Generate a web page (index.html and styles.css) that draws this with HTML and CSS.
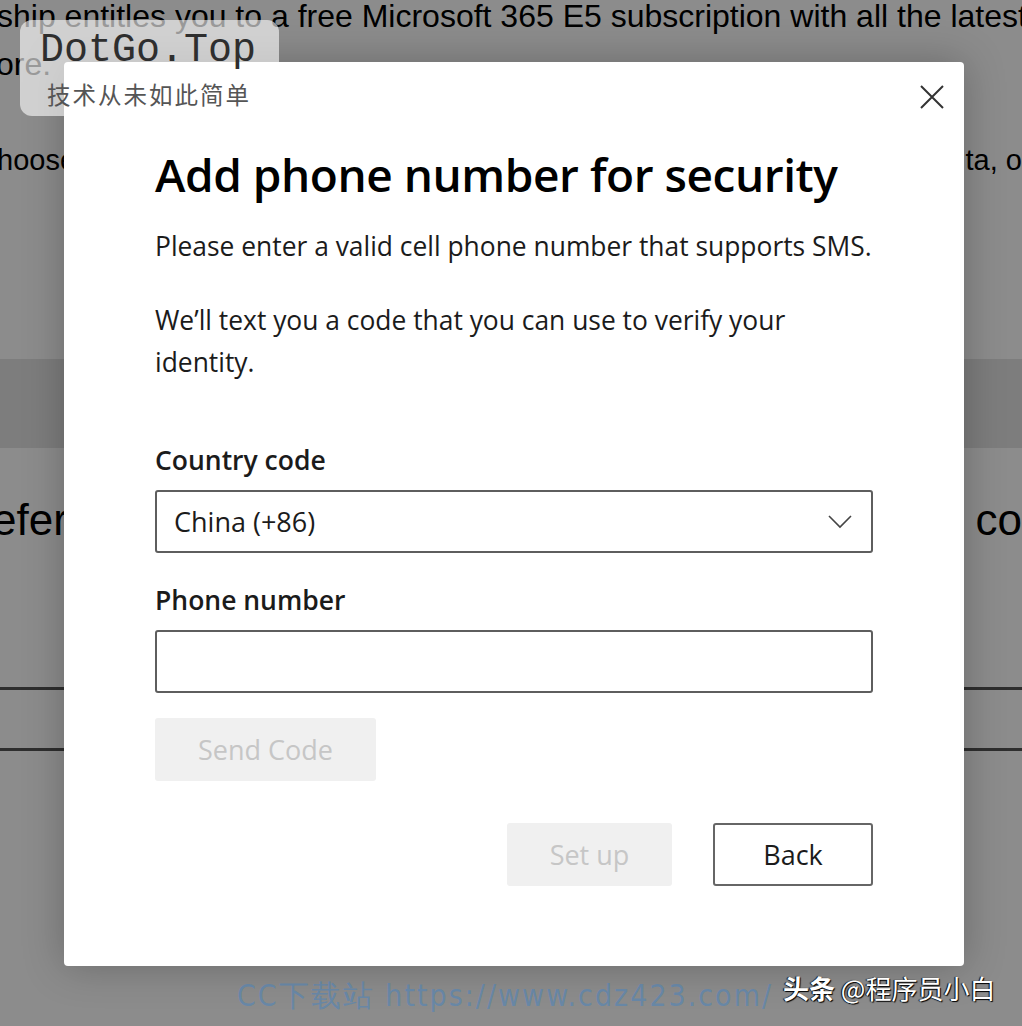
FILE: index.html
```html
<!DOCTYPE html>
<html lang="en">
<head>
<meta charset="utf-8">
<title>Add phone number for security</title>
<link rel="stylesheet" href="styles.css">
</head>
<body>
<div class="page">
  <p class="bg-line l1">ship entitles you to a free Microsoft 365 E5 subscription with all the latest features</p>
  <p class="bg-line l2">ore.</p>
  <div class="bg-row l3"><span>hoose which apps</span><span>ta, o</span></div>
  <div class="band"></div>
  <div class="bg-row big"><span>efer</span><span>co</span></div>
  <div class="rule r1"></div>
  <div class="rule r2"></div>
</div>
<div class="overlay"></div>

<div class="modal" role="dialog" aria-labelledby="dlg-title">
  <button class="close" aria-label="Close">
    <svg width="24" height="24" viewBox="0 0 24 24"><path d="M1 1 L23 23 M23 1 L1 23" stroke="#333" stroke-width="2" fill="none"/></svg>
  </button>
  <h1 id="dlg-title" class="title">Add phone number for security</h1>
  <p class="text t1">Please enter a valid cell phone number that supports SMS.</p>
  <p class="text t2">We’ll text you a code that you can use to verify your identity.</p>
  <label class="label lbl-country">Country code</label>
  <div class="field select">
    <span>China (+86)</span>
    <svg class="chev" width="24" height="14" viewBox="0 0 24 14"><path d="M1 1 L12 12 L23 1" stroke="#444" stroke-width="1.6" fill="none"/></svg>
  </div>
  <label class="label lbl-phone">Phone number</label>
  <div class="field input"></div>
  <button class="btn btn-disabled send">Send Code</button>
  <div class="actions">
    <button class="btn btn-disabled setup">Set up</button>
    <button class="btn btn-outline back">Back</button>
  </div>
</div>

<div class="wm-box">
  <div class="wm-title">DotGo.Top</div>
  <div class="wm-sub">技术从未如此简单</div>
</div>
<div class="wm-cc">CC下载站 https://www.cdz423.com/</div>
<div class="wm-tt"><b>头条</b> @程序员小白</div>
</body>
</html>
```
FILE: styles.css
```css
html, body {
  margin: 0;
  padding: 0;
  width: 1022px;
  height: 1026px;
  overflow: hidden;
  background: #fff;
}
body {
  position: relative;
  font-family: "Liberation Sans", Arial, sans-serif;
}
.page {
  display: flex;
  flex-direction: column;
  color: #000;
  width: 1022px;
  overflow: hidden;
}
.bg-line {
  margin: 0;
  font-size: 32px;
  line-height: 48px;
  white-space: nowrap;
  overflow: hidden;
}
.l1 { margin-top: -8px; text-indent: -3px; }
.l2 { text-indent: -4px; }
.bg-row {
  display: flex;
  justify-content: space-between;
  white-space: nowrap;
  font-size: 29px;
  overflow: hidden;
}
.l3 { margin-top: 52px; margin-left: -3px; line-height: 40px; }
.band {
  margin-top: 179px;
  height: 89px;
  background: #e4e4e4;
}
.big {
  font-size: 44px;
  line-height: 50px;
  margin-top: 47px;
  margin-left: -8px;
}
.rule { height: 3px; background: #555; }
.r1 { margin-top: 142px; }
.r2 { margin-top: 58px; }

.overlay {
  position: absolute;
  inset: 0;
  background: rgba(0, 0, 0, 0.45);
}

.modal {
  position: absolute;
  left: 64px;
  top: 62px;
  width: 900px;
  height: 904px;
  box-sizing: border-box;
  padding: 0 91px;
  background: #fff;
  border-radius: 4px;
  box-shadow: 0 0 40px rgba(0,0,0,0.25);
  font-family: "Open Sans", "Noto Sans", sans-serif;
  color: #1b1b1b;
  display: flex;
  flex-direction: column;
}
.close {
  position: absolute;
  top: 23px;
  right: 20px;
  border: 0;
  background: none;
  padding: 0;
  width: 24px;
  height: 24px;
  display: flex;
}
.title {
  margin: 80px 0 0;
  font-size: 46px;
  font-weight: 600;
  line-height: 64px;
  letter-spacing: -0.45px;
  color: #000;
}
.text {
  margin: 0;
  font-size: 26.4px;
  line-height: 42px;
  color: #1b1b1b;
}
.t1 { margin-top: 19px; }
.t2 { margin-top: 32px; }
.label {
  display: block;
  font-size: 26.5px;
  font-weight: 600;
  line-height: 36px;
  color: #1b1b1b;
}
.lbl-country { margin-top: 59px; }
.lbl-phone { margin-top: 29px; }
.field {
  margin-top: 12px;
  height: 63px;
  box-sizing: border-box;
  border: 2px solid #5e5e5e;
  border-radius: 3px;
  display: flex;
  align-items: center;
  justify-content: space-between;
  padding: 0 19px 0 17px;
  font-size: 27px;
  color: #1b1b1b;
}
.btn {
  font-family: "Open Sans", "Noto Sans", sans-serif;
  font-size: 27px;
  height: 63px;
  border-radius: 3px;
  box-sizing: border-box;
  padding: 0;
}
.btn-disabled {
  background: #f0f0f0;
  color: #c6c6c6;
  border: 0;
}
.send {
  margin-top: 25px;
  width: 221px;
  align-self: flex-start;
}
.actions {
  margin-top: 42px;
  display: flex;
  justify-content: flex-end;
  gap: 41px;
}
.setup { width: 165px; }
.btn-outline {
  background: #fff;
  border: 2px solid #666;
  color: #1b1b1b;
  width: 160px;
}

.wm-box {
  position: absolute;
  left: 20px;
  top: 20px;
  width: 259px;
  height: 96px;
  border-radius: 12px;
  background: rgba(255, 255, 255, 0.6);
  box-sizing: border-box;
  padding: 8px 0 0 20px;
}
.wm-title {
  font-family: "Liberation Mono", "DejaVu Sans Mono", monospace;
  font-size: 40px;
  line-height: 46px;
  color: #2e2e2e;
}
.wm-sub {
  margin-top: 5px;
  margin-left: 7px;
  font-family: "Noto Sans CJK SC", sans-serif;
  font-size: 23.5px;
  line-height: 30px;
  letter-spacing: 2px;
  color: #555;
}
.wm-cc {
  position: absolute;
  left: 237px;
  top: 977px;
  white-space: nowrap;
  font-family: "DejaVu Sans Condensed", "DejaVu Sans", sans-serif;
  font-size: 30px;
  line-height: 38px;
  letter-spacing: 2px;
  color: rgba(60, 130, 200, 0.45);
}
.wm-tt {
  position: absolute;
  left: 783px;
  top: 971px;
  white-space: nowrap;
  font-family: "Noto Sans CJK SC", sans-serif;
  font-size: 26px;
  line-height: 34px;
  color: #fff;
  text-shadow: 1px 1px 1px #000, -1px 0 1px #000;
}
.wm-tt b { font-weight: 700; }
```
